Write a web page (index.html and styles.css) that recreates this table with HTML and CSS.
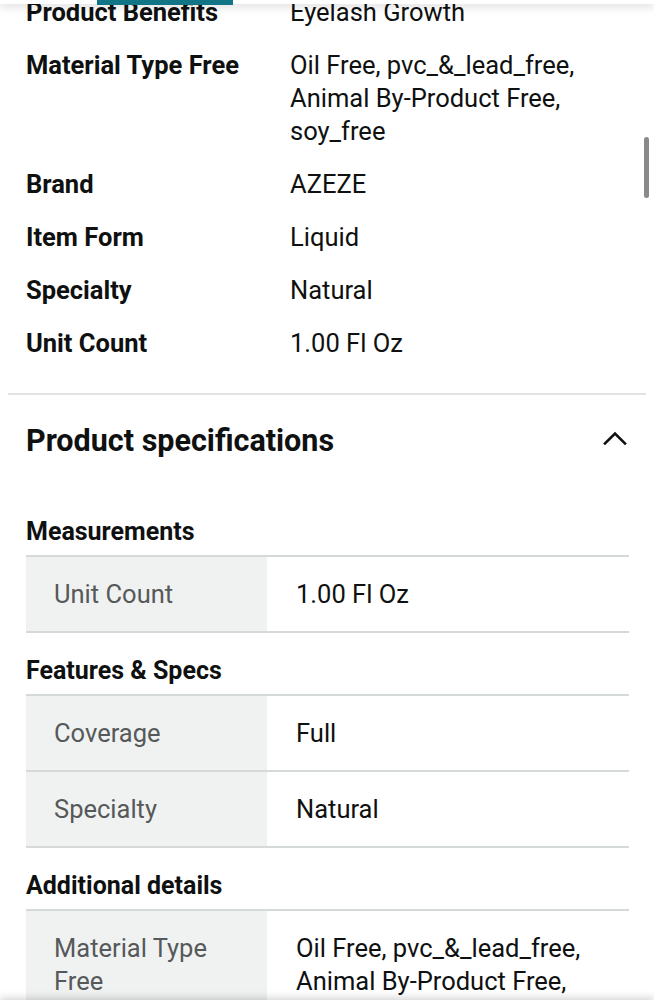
FILE: index.html
```html
<!DOCTYPE html>
<html lang="en">
<head>
<meta charset="utf-8">
<title>Product details</title>
<link rel="stylesheet" href="styles.css">
</head>
<body>
<div class="topbar"><span class="tab"></span></div>
<main class="page">
  <section class="facts">
    <div class="fact"><div class="fact-k">Product Benefits</div><div class="fact-v">Eyelash Growth</div></div>
    <div class="fact"><div class="fact-k">Material Type Free</div><div class="fact-v">Oil Free, pvc_&amp;_lead_free,<br>Animal By-Product Free,<br>soy_free</div></div>
    <div class="fact"><div class="fact-k">Brand</div><div class="fact-v">AZEZE</div></div>
    <div class="fact"><div class="fact-k">Item Form</div><div class="fact-v">Liquid</div></div>
    <div class="fact"><div class="fact-k">Specialty</div><div class="fact-v">Natural</div></div>
    <div class="fact"><div class="fact-k">Unit Count</div><div class="fact-v">1.00 Fl Oz</div></div>
  </section>
  <hr class="divider">
  <section class="specs">
    <div class="specs-head">
      <h2 class="specs-title">Product specifications</h2>
      <svg class="chev" width="24" height="16" viewBox="0 0 24 16"><path d="M2 13.5 L12 3.5 L22 13.5" fill="none" stroke="#0f1111" stroke-width="2.6" stroke-linecap="square"/></svg>
    </div>
    <h3 class="group-title">Measurements</h3>
    <div class="table">
      <div class="row"><div class="cell-k">Unit Count</div><div class="cell-v">1.00 Fl Oz</div></div>
    </div>
    <h3 class="group-title">Features &amp; Specs</h3>
    <div class="table">
      <div class="row"><div class="cell-k">Coverage</div><div class="cell-v">Full</div></div>
      <div class="row"><div class="cell-k">Specialty</div><div class="cell-v">Natural</div></div>
    </div>
    <h3 class="group-title">Additional details</h3>
    <div class="table">
      <div class="row"><div class="cell-k">Material Type<br>Free</div><div class="cell-v">Oil Free, pvc_&amp;_lead_free,<br>Animal By-Product Free,<br>soy_free</div></div>
    </div>
  </section>
</main>
<div class="scrollthumb"></div>
<div class="bottombar"></div>
</body>
</html>
```

FILE: styles.css
```css
* { box-sizing: border-box; }
html, body { margin: 0; padding: 0; background: #fff; overflow: hidden; }
body {
  font-family: Roboto, "Liberation Sans", sans-serif;
  color: #0f1111;
  width: 654px;
  height: 1000px;
}
.topbar {
  position: fixed;
  top: 0; left: 0; right: 0;
  height: 4px;
  background: #fff;
  box-shadow: 0 2px 8px rgba(0,0,0,0.22);
  z-index: 5;
}
.tab {
  position: absolute;
  left: 97px; top: 0;
  width: 136px; height: 5px;
  background: #117585;
}
.page { padding: 0 8px; }
.facts {
  margin-top: -4px;
  padding: 0 18px;
  display: flex;
  flex-direction: column;
  gap: 20px;
}
.fact { display: flex; font-size: 25.5px; line-height: 33px; }
.fact-k { width: 264px; font-weight: 700; flex: none; }
.fact-v { font-weight: 400; }
.divider {
  margin: 33px 0 0;
  border: 0;
  height: 2px;
  background: #e3e3e3;
}
.specs { padding: 0 17px 0 18px; }
.specs-head {
  display: flex;
  align-items: center;
  justify-content: space-between;
  height: 99px;
  padding: 0 2px 8px 0;
}
.specs-title { margin: 0; font-size: 30.5px; font-weight: 700; line-height: 36px; }
.chev { display: block; margin-top: -5px; }
.group-title {
  margin: 0;
  font-size: 25px;
  font-weight: 700;
  line-height: 30px;
  padding: 23px 0 8px;
}
.table { border-top: 2px solid #d5d9d9; }
.row {
  display: flex;
  border-bottom: 2px solid #d5d9d9;
  font-size: 25.5px;
  line-height: 33px;
}
.cell-k {
  width: 241px;
  flex: none;
  background: #f0f2f2;
  color: #565959;
  padding: 21px 10px 20px 28px;
}
.cell-v { padding: 21px 10px 20px 29px; }
.scrollthumb {
  position: fixed;
  left: 644px; top: 137px;
  width: 5px; height: 61px;
  border-radius: 3px;
  background: #8a8a8a;
}
.bottombar {
  position: fixed;
  left: 0; right: 0; top: 1000px;
  height: 60px;
  background: #fff;
  box-shadow: 0 -2px 8px rgba(0,0,0,0.18);
}
```
